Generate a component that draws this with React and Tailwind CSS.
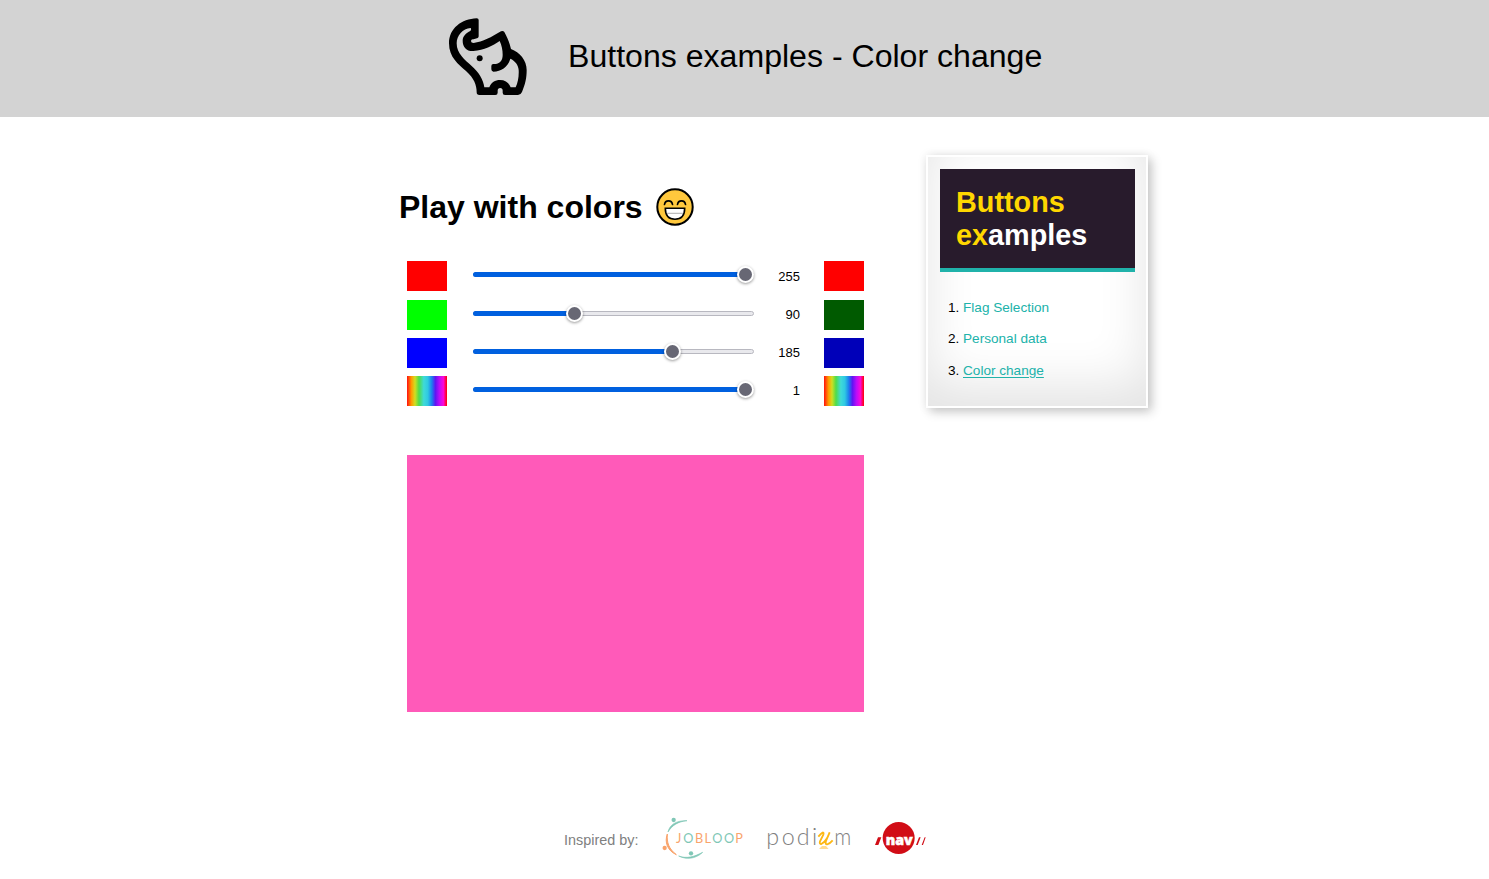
const channels = [
  { label: "Red", value: 255, fill: 273, base: "bg-[#ff0000]", result: "bg-[#ff0000]" },
  { label: "Green", value: 90, fill: 101.5, base: "bg-[#00ff00]", result: "bg-[#005a00]" },
  { label: "Blue", value: 185, fill: 200, base: "bg-[#0000ff]", result: "bg-[#0000b9]" },
  { label: "Alpha", value: 1, fill: 273, base: "rainbow", result: "rainbow" },
];

const rainbow =
  "bg-[linear-gradient(90deg,#ff1010_0%,#ff9a00_11%,#d0de21_20%,#4fdc4a_30%,#3fdad8_42%,#2fc9e2_52%,#1c7fee_62%,#5f15f2_71%,#ba0cf8_81%,#fb07d9_91%,#ff0000_100%)]";

function Elephant() {
  return (
    <svg className="h-[120px] w-[120px] shrink-0" viewBox="0 0 360 360">
      <path
        fill="#000"
        fillRule="evenodd"
        d="M140 55C95 57 57 85 57 130C57 172 85 193 108 213C132 234 140 255 140 277Q140 285 148 285H196Q203 285 203 278V272Q203 264 210.500 264Q218 264 218 272V278Q218 285 225 285H264Q272 285 276 276C286 252 290 235 290 210C290 181 269 157 243 147C239 129 232 112 223 96Q219 91 213 94C185 111 158 126 131 129Q122 129 123 122Q125 117 131 118L143 114Q146 113 146 109V60Q146 55 140 55ZM122 84Q125 88 121 93C108 99 98 109 98 122C98 142 110 154 130 153C163 151 188 137 209 123C215 136 218 150 218 165C218 184 207 193 190 192Q184 192 184 198V208Q184 214 190 215C215 215 234 200 241 176C255 182 265 195 266 210C267 230 264 246 257 262H242C236 247 225 240 210 240C195 240 184 247 178 262H163C160 239 147 217 125 198C104 179 80 161 80 130C80 107 98 86 122 84Z"
      />
      <circle cx="149" cy="175" r="9" />
    </svg>
  );
}

function Grin() {
  return (
    <svg className="h-[38px] w-[38px]" viewBox="0 0 38 38" fill="none">
      <circle cx="19" cy="19" r="17.700" fill="#ffc83d" stroke="#000" strokeWidth="2" />
      <path d="M8.500 16.500Q9 12.800 12.500 12.800T16.500 16.500M21.500 16.500Q22 12.800 25.500 12.800T29.500 16.500" stroke="#000" strokeWidth="1.700" strokeLinecap="round" />
      <path d="M9.300 20.300H28.700C28.700 27.500 25 31.300 19 31.300S9.300 27.500 9.300 20.300Z" fill="#fff" stroke="#000" strokeWidth="1.600" />
      <path d="M11 25.300H27" stroke="#999" strokeWidth=".8" />
    </svg>
  );
}

function Track({ fill }) {
  return (
    <div className="relative ml-[26px] h-[5px] w-[281px] rounded-full border border-[#b8b8c0] bg-[#e9e9ed]">
      <div className="absolute -top-px -left-px h-[5px] rounded-full bg-[#0060df]" style={{ width: fill }} />
      <div
        className="absolute top-[-7px] h-[17px] w-[17px] rounded-full border-2 border-white bg-[#676774] shadow-[0_1px_3px_rgba(0,0,0,0.4)]"
        style={{ left: fill - 10 }}
      />
    </div>
  );
}

function Jobloop() {
  return (
    <svg className="h-[60px] w-[110px]" viewBox="0 0 330 180" fill="none">
      <path d="M54 66C59 44 79 31 111 32C84 35 67 45 54 66Z" fill="#80c7b6" stroke="#80c7b6" strokeWidth="2" />
      <path d="M52 72C43 96 52 122 79 134C56 116 50 98 52 72Z" fill="#f9a46c" stroke="#f9a46c" strokeWidth="3" />
      <path d="M86 138C110 147 133 140 158 127C136 148 108 149 86 138Z" fill="#80c7b6" stroke="#80c7b6" strokeWidth="2" />
      <circle cx="71" cy="30" r="6.500" fill="#80c7b6" />
      <circle cx="44" cy="114" r="6.500" fill="#f9a46c" />
      <circle cx="123" cy="130" r="6.500" fill="#80c7b6" />
      <g fontFamily="Lato, sans-serif" fontSize="38" textAnchor="middle">
        <text y="98" fill="#f9a46c" x="86">J</text>
        <text y="98" fill="#80c7b6" x="115">O</text>
        <text y="98" fill="#f9a46c" x="147">B</text>
        <text y="98" fill="#f9a46c" x="173">L</text>
        <text y="98" fill="#80c7b6" x="202">O</text>
        <text y="98" fill="#80c7b6" x="237">O</text>
        <text y="98" fill="#f9a46c" x="267">P</text>
      </g>
    </svg>
  );
}

function Podium() {
  return (
    <svg className="-ml-[5px] h-[60px] w-[110px]" viewBox="0 0 330 180">
      <g fontFamily="Lato, sans-serif" fontWeight="300" fontSize="70" fill="#808080">
        <text x="34" y="105">p</text>
        <text x="80" y="105">o</text>
        <text x="125" y="105">d</text>
        <text x="171" y="105">i</text>
        <text x="238" y="105" textLength="51" lengthAdjust="spacingAndGlyphs">m</text>
      </g>
      <path d="M190 80C201 67 208 63 205 74L195 94C191 107 204 104 216 85L224 67L213 93C208 108 221 105 233 91" fill="none" stroke="#fdb813" strokeWidth="5.500" />
      <path d="M192 117L201 108H213L221 117Z" fill="#ffdc91" />
    </svg>
  );
}

function Nav() {
  return (
    <svg className="h-[60px] w-[80px]" viewBox="0 0 240 180">
      <circle cx="101" cy="84" r="48" fill="#d10d16" />
      <path fill="#d10d16" d="M39 82H49L40 105H30ZM162 82H167L158 105H153ZM179 82H182L174 105H170Z" />
      <text x="62" y="104" fill="#fff" stroke="#fff" strokeWidth="1.500" fontFamily="Open Sans, sans-serif" fontSize="41" fontWeight="800" textLength="81" lengthAdjust="spacingAndGlyphs">nav</text>
    </svg>
  );
}

export default function App() {
  return (
    <div className="flex h-[879px] w-full flex-col overflow-hidden bg-white font-['Liberation_Sans',Arial,sans-serif] text-black">
      <header className="flex h-[117px] shrink-0 items-start bg-[#d3d3d3] pl-[430px]">
        <Elephant />
        <h1 className="ml-[18px] pt-[37px] text-[32.100px] leading-[38px] whitespace-nowrap">Buttons examples - Color change</h1>
      </header>
      <main className="flex h-[693px] shrink-0 items-start pl-[399px]">
        <section className="w-[466px] pt-[71px]">
          <h2 className="flex h-[38px] items-center gap-[13px] text-[32px] font-bold whitespace-nowrap">
            Play with colors <Grin />
          </h2>
          <div className="mt-[35.300px] ml-2 flex flex-col gap-[8.300px]">
            {channels.map((c) => (
              <div key={c.label} className="flex h-[30px] items-center">
                <div className={`h-[30px] w-10 ${c.base === "rainbow" ? rainbow : c.base}`} />
                <div className="-mt-[3px]">
                  <Track fill={c.fill} />
                </div>
                <span className="w-[46px] text-right text-[13px]">{c.value}</span>
                <div className={`ml-6 h-[30px] w-10 ${c.result === "rainbow" ? rainbow : c.result}`} />
              </div>
            ))}
          </div>
          <div className="mt-[48.800px] ml-2 h-[257px] w-[457px] bg-[#ff5ab9]" />
        </section>
        <aside className="mt-[38px] ml-[61px] h-[253px] w-[222px] border-2 border-white bg-white py-3 pr-[11px] pl-3 shadow-[4px_4px_10px_rgba(0,0,0,0.2),0_0_10px_rgba(0,0,0,0.07),inset_0_-20px_50px_rgba(0,0,0,0.11)]">
          <div className="h-[103px] border-b-4 border-[#20b2aa] bg-[#281b2c] pt-[17px] pl-4 text-[28.800px] leading-[33px] font-bold text-white">
            <span className="text-[#ffd700]">Buttons</span>
            <br />
            <span className="text-[#ffd700]">ex</span>amples
          </div>
          <ol className="mt-[19.600px] ml-[23px] list-decimal text-[13.600px] leading-[31.600px]">
            <li><a className="text-[#20b2aa]">Flag Selection</a></li>
            <li><a className="text-[#20b2aa]">Personal data</a></li>
            <li><a className="text-[#20b2aa] underline underline-offset-2">Color change</a></li>
          </ol>
        </aside>
      </main>
      <footer className="flex h-[60px] items-center pl-[564px]">
        <span className="w-[86px] pt-px text-[14.400px] whitespace-nowrap text-[#808080]">Inspired by:</span>
        <Jobloop />
        <Podium />
        <Nav />
      </footer>
    </div>
  );
}
